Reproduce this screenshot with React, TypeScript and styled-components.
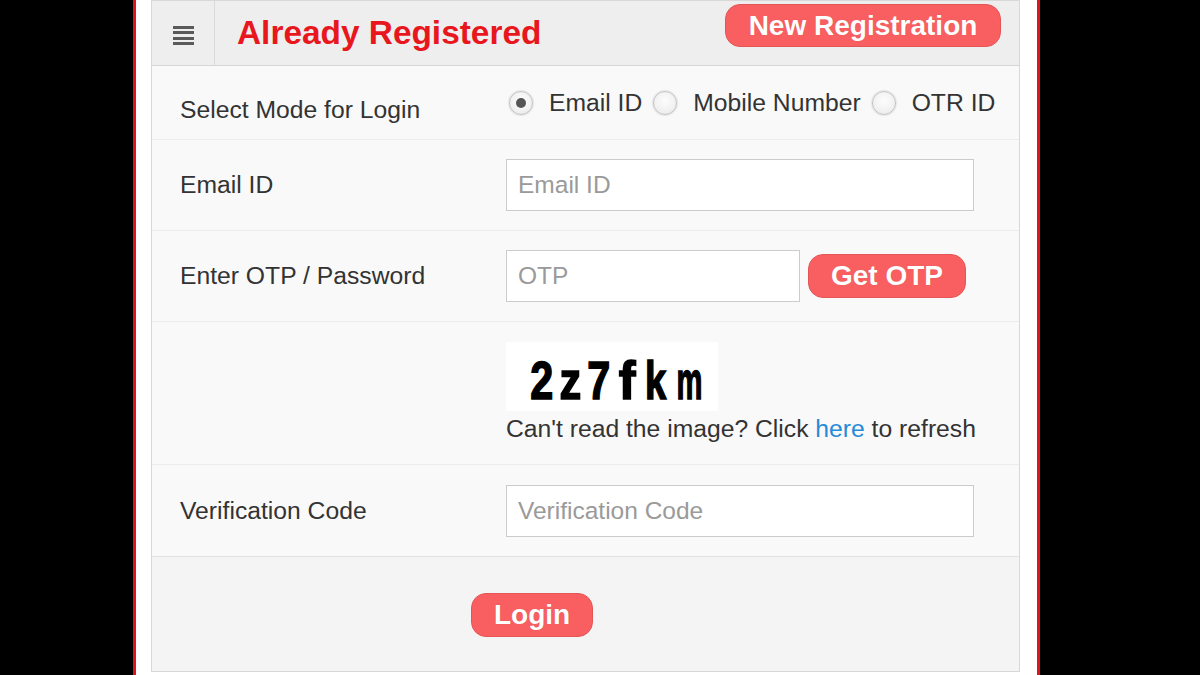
import React from "react";
import styled, { createGlobalStyle } from "styled-components";

const Global = createGlobalStyle`
  html, body { margin: 0; padding: 0; background: #000; }
  body { font-family: "Liberation Sans", Arial, sans-serif; }
  * { box-sizing: border-box; }
`;

const Frame = styled.div`
  width: 907px;
  height: 675px;
  margin-left: 133px;
  background: #fff;
  border-left: 3px solid #e0141b;
  border-right: 3px solid #e0141b;
  padding: 0 17px 0 15px;
  overflow: hidden;
`;

const Panel = styled.div`
  border: 1px solid #d8d8d8;
  background: #f9f9f9;
  height: 672px;
  display: flex;
  flex-direction: column;
`;

const Header = styled.div`
  display: flex;
  align-items: flex-start;
  height: 65px;
  background: #eeeeee;
  border-bottom: 1px solid #d6d6d6;
`;

const MenuCell = styled.div`
  width: 63px;
  height: 64px;
  border-right: 1px solid #dadada;
  display: flex;
  align-items: center;
  justify-content: center;
  padding-top: 5px;
`;

const MenuIcon = styled.div`
  width: 21px;
  display: flex;
  flex-direction: column;
  gap: 2.4px;
  span {
    display: block;
    height: 3px;
    background: #5a5a5a;
  }
`;

const Title = styled.h1`
  margin: 0;
  padding: 12px 0 0 22px;
  font-size: 33.4px;
  line-height: 40px;
  font-weight: bold;
  color: #e8171d;
  flex: 1;
`;

const PillButton = styled.button`
  background: #f95f60;
  border: 1px solid #e45556;
  border-radius: 15px;
  color: #fff;
  font-family: "Liberation Sans", Arial, sans-serif;
  font-weight: bold;
  font-size: 28px;
  line-height: 32px;
  height: 44px;
  padding: 0 22px;
  text-shadow: 0 0 1px rgba(0, 0, 0, 0.15);
  cursor: pointer;
  white-space: nowrap;
`;

const HeaderButton = styled(PillButton)`
  margin: 3px 18px 0 0;
  width: 276px;
  height: 43px;
`;

const Row = styled.div<{ $pad?: string }>`
  display: grid;
  grid-template-columns: 354px 1fr;
  align-items: center;
  padding: ${(p) => p.$pad || "19px 0"};
  border-bottom: 1px solid #ececec;
`;

const ModeRow = styled(Row)`
  height: 74px;
  padding: 0;
`;

const Label = styled.div<{ $top?: number }>`
  padding-left: 28px;
  font-size: 24.7px;
  line-height: 28px;
  color: #333;
  align-self: ${(p) => (p.$top !== undefined ? "start" : "center")};
  padding-top: ${(p) => p.$top ?? 0}px;
`;

const RadioGroup = styled.div`
  display: flex;
  align-items: center;
  align-self: start;
  padding-top: 23px;
  padding-left: 2px;
  font-size: 24.7px;
  line-height: 28px;
  color: #333;
`;

const RadioOption = styled.label`
  display: flex;
  align-items: center;
  margin-right: 10px;
`;

const RadioDot = styled.span<{ $checked?: boolean }>`
  width: 24px;
  height: 24px;
  border-radius: 50%;
  border: 1px solid #c4c4c4;
  background: radial-gradient(circle at 50% 40%, #fdfdfd 0%, #f1f1f1 60%, #e4e4e4 100%);
  box-shadow: 0 0 2px rgba(0, 0, 0, 0.25);
  display: flex;
  align-items: center;
  justify-content: center;
  margin: -1px 16px 0 1px;
  &::after {
    content: "";
    display: ${(p) => (p.$checked ? "block" : "none")};
    width: 10px;
    height: 10px;
    border-radius: 50%;
    background: #555;
  }
`;

const Input = styled.input<{ $w: number }>`
  width: ${(p) => p.$w}px;
  height: 52px;
  border: 1px solid #cccccc;
  background: #fff;
  padding: 0 11px;
  font-family: "Liberation Sans", Arial, sans-serif;
  font-size: 24.5px;
  color: #333;
  outline: none;
  &::placeholder { color: #9a9a9a; }
`;

const InlineGroup = styled.div`
  display: flex;
  align-items: center;
  gap: 8px;
`;

const CaptchaCol = styled.div`
  display: flex;
  flex-direction: column;
  align-items: flex-start;
`;

const CaptchaImage = styled.div`
  width: 212px;
  height: 69px;
  background: #fff;
  padding: 4px 0 0 21px;
  overflow: hidden;
  display: flex;
  font-family: "Liberation Sans", Arial, sans-serif;
  font-weight: bold;
  font-size: 53px;
  line-height: 69px;
  color: #000;
  -webkit-text-stroke: 1.6px #000;
`;

const CaptchaChar = styled.span<{ $sx: number }>`
  display: inline-block;
  width: 28.5px;
  text-align: center;
  transform: scaleX(${(p) => p.$sx});
`;

const Hint = styled.div`
  margin-top: 4px;
  font-size: 24.7px;
  line-height: 28px;
  color: #333;
  a { color: #268bd8; text-decoration: none; }
`;

const Footer = styled.div`
  flex: 1;
  background: #f4f4f4;
  border-top: 1px solid #e2e2e2;
  margin-top: -1px;
  padding: 36px 0 0 319px;
`;

const captcha: [string, number][] = [
  ["2", 0.78],
  ["z", 0.82],
  ["7", 0.78],
  ["f", 0.95],
  ["k", 0.72],
  ["m", 0.55],
];

export default function App() {
  return (
    <>
      <Global />
      <Frame>
        <Panel>
          <Header>
            <MenuCell>
              <MenuIcon>
                <span />
                <span />
                <span />
                <span />
              </MenuIcon>
            </MenuCell>
            <Title>Already Registered</Title>
            <HeaderButton>New Registration</HeaderButton>
          </Header>

          <ModeRow>
            <Label $top={30}>Select Mode for Login</Label>
            <RadioGroup>
              <RadioOption>
                <RadioDot $checked />
                Email ID
              </RadioOption>
              <RadioOption>
                <RadioDot />
                Mobile Number
              </RadioOption>
              <RadioOption>
                <RadioDot />
                OTR ID
              </RadioOption>
            </RadioGroup>
          </ModeRow>

          <Row>
            <Label>Email ID</Label>
            <Input $w={468} placeholder="Email ID" />
          </Row>

          <Row>
            <Label>Enter OTP / Password</Label>
            <InlineGroup>
              <Input $w={294} placeholder="OTP" />
              <PillButton>Get OTP</PillButton>
            </InlineGroup>
          </Row>

          <Row $pad="20px 0 21px 0">
            <div />
            <CaptchaCol>
              <CaptchaImage>
                {captcha.map(([c, sx], i) => (
                  <CaptchaChar key={i} $sx={sx}>
                    {c}
                  </CaptchaChar>
                ))}
              </CaptchaImage>
              <Hint>
                Can't read the image? Click <a href="#">here</a> to refresh
              </Hint>
            </CaptchaCol>
          </Row>

          <Row $pad="20px 0 19px 0">
            <Label>Verification Code</Label>
            <Input $w={468} placeholder="Verification Code" />
          </Row>

          <Footer>
            <PillButton>Login</PillButton>
          </Footer>
        </Panel>
      </Frame>
    </>
  );
}
